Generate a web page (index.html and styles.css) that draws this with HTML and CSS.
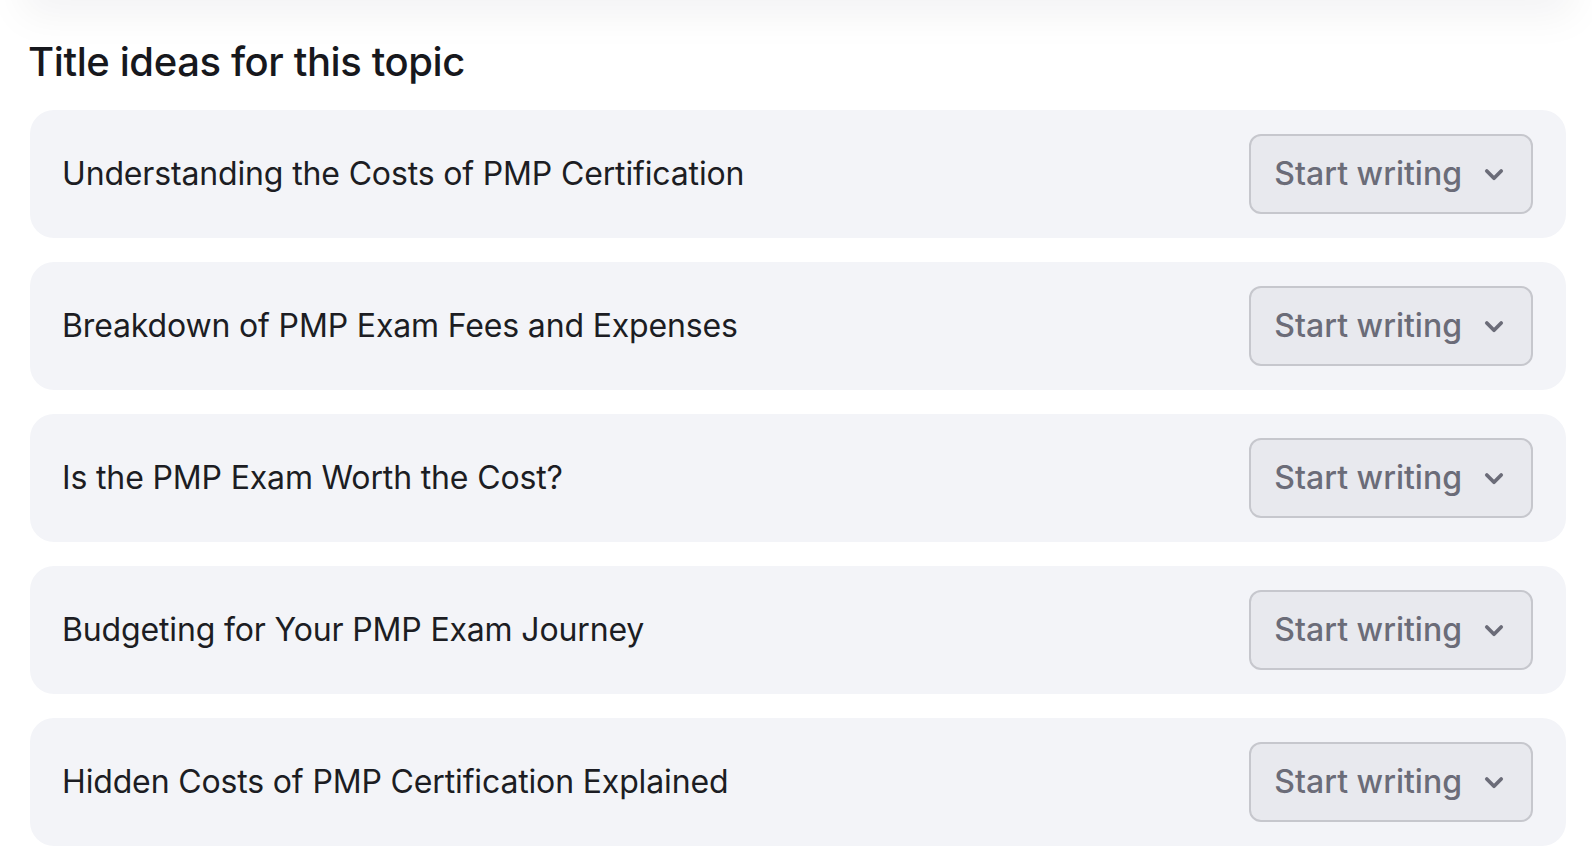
FILE: index.html
```html
<!DOCTYPE html>
<html lang="en">
<head>
<meta charset="utf-8">
<title>Title ideas for this topic</title>
<link rel="stylesheet" href="styles.css">
</head>
<body>
<div class="page">
  <div class="top-shade"></div>
  <h1 class="heading">Title ideas for this topic</h1>
  <ul class="ideas">
    <li class="idea">
      <span class="idea-title">Understanding the Costs of PMP Certification</span>
      <button class="start-btn" type="button"><span>Start writing</span><svg class="chev" viewBox="0 0 20 20" aria-hidden="true"><path d="M4 7.5 L10 13.5 L16 7.5"/></svg></button>
    </li>
    <li class="idea">
      <span class="idea-title">Breakdown of PMP Exam Fees and Expenses</span>
      <button class="start-btn" type="button"><span>Start writing</span><svg class="chev" viewBox="0 0 20 20" aria-hidden="true"><path d="M4 7.5 L10 13.5 L16 7.5"/></svg></button>
    </li>
    <li class="idea">
      <span class="idea-title">Is the PMP Exam Worth the Cost?</span>
      <button class="start-btn" type="button"><span>Start writing</span><svg class="chev" viewBox="0 0 20 20" aria-hidden="true"><path d="M4 7.5 L10 13.5 L16 7.5"/></svg></button>
    </li>
    <li class="idea">
      <span class="idea-title">Budgeting for Your PMP Exam Journey</span>
      <button class="start-btn" type="button"><span>Start writing</span><svg class="chev" viewBox="0 0 20 20" aria-hidden="true"><path d="M4 7.5 L10 13.5 L16 7.5"/></svg></button>
    </li>
    <li class="idea">
      <span class="idea-title">Hidden Costs of PMP Certification Explained</span>
      <button class="start-btn" type="button"><span>Start writing</span><svg class="chev" viewBox="0 0 20 20" aria-hidden="true"><path d="M4 7.5 L10 13.5 L16 7.5"/></svg></button>
    </li>
  </ul>
</div>
</body>
</html>
```

FILE: styles.css
```css
html, body {
  margin: 0;
  padding: 0;
  background: #ffffff;
}

body {
  font-family: Inter, "Noto Sans", "Liberation Sans", sans-serif;
  color: #1b1c21;
  overflow: hidden;
}

.page {
  padding: 38px 26px 0 30px;
}

.top-shade {
  height: 40px;
  margin-top: -78px;
  margin-bottom: 38px;
  background: #ffffff;
  box-shadow: 0 8px 40px 8px rgba(20, 20, 30, 0.05);
}

.heading {
  margin: 0 0 24px -2px;
  font-size: 40px;
  line-height: 48px;
  font-weight: 500;
  color: #17181d;
  letter-spacing: -0.4px;
}

.ideas {
  list-style: none;
  margin: 0;
  padding: 0;
  display: flex;
  flex-direction: column;
  gap: 24px;
}

.idea {
  height: 128px;
  box-sizing: border-box;
  padding: 0 33px 0 32px;
  background: #f3f4f8;
  border-radius: 24px;
  display: flex;
  align-items: center;
  justify-content: space-between;
}

.idea-title {
  font-size: 32px;
  line-height: 40px;
  font-weight: 400;
  color: #1c1d23;
  letter-spacing: -0.15px;
}

.start-btn {
  height: 80px;
  box-sizing: border-box;
  padding: 0 25px 0 23px;
  border: 2px solid #c6c7cd;
  border-radius: 12px;
  background: #e8e9ee;
  color: #6b6c78;
  font-family: Inter, "Noto Sans", "Liberation Sans", sans-serif;
  font-size: 32px;
  line-height: 48px;
  font-weight: 500;
  display: flex;
  align-items: center;
  gap: 20px;
  cursor: pointer;
}

.chev {
  width: 24px;
  height: 24px;
  fill: none;
  stroke: #6b6c78;
  stroke-width: 3.1;
  stroke-linecap: round;
  stroke-linejoin: round;
}
```
